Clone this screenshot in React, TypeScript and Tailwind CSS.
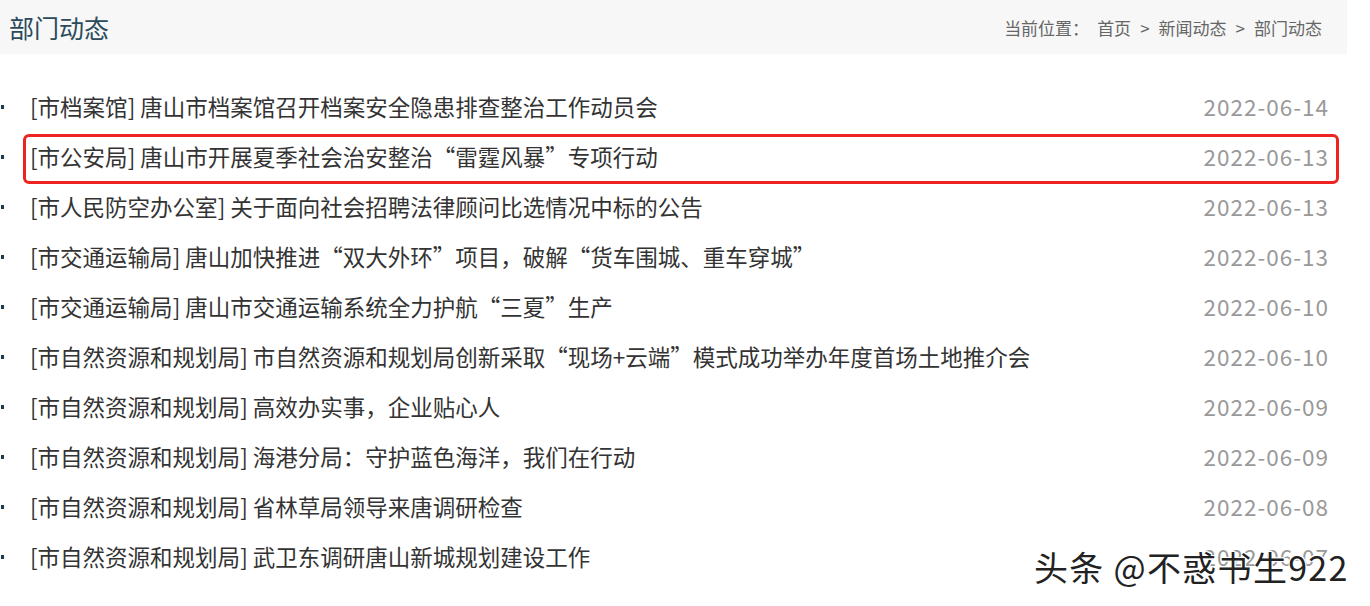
const items = [
  { dept: "市档案馆", title: "唐山市档案馆召开档案安全隐患排查整治工作动员会", date: "2022-06-14" },
  { dept: "市公安局", title: "唐山市开展夏季社会治安整治“雷霆风暴”专项行动", date: "2022-06-13", marked: true },
  { dept: "市人民防空办公室", title: "关于面向社会招聘法律顾问比选情况中标的公告", date: "2022-06-13" },
  { dept: "市交通运输局", title: "唐山加快推进“双大外环”项目，破解“货车围城、重车穿城”", date: "2022-06-13" },
  { dept: "市交通运输局", title: "唐山市交通运输系统全力护航“三夏”生产", date: "2022-06-10" },
  { dept: "市自然资源和规划局", title: "市自然资源和规划局创新采取“现场+云端”模式成功举办年度首场土地推介会", date: "2022-06-10" },
  { dept: "市自然资源和规划局", title: "高效办实事，企业贴心人", date: "2022-06-09" },
  { dept: "市自然资源和规划局", title: "海港分局：守护蓝色海洋，我们在行动", date: "2022-06-09" },
  { dept: "市自然资源和规划局", title: "省林草局领导来唐调研检查", date: "2022-06-08" },
  { dept: "市自然资源和规划局", title: "武卫东调研唐山新城规划建设工作", date: "2022-06-07" },
];

const font = { fontFamily: '"Microsoft YaHei", "Noto Sans CJK SC", "Noto Sans", sans-serif' };

export default function App() {
  return (
    <div className="relative w-[1370px] h-[606px] bg-white overflow-hidden" style={font}>
      <div className="w-[1347px] h-[54px] bg-[#f7f7f7] flex items-center justify-between pl-[9px] pr-[25px]">
        <h1 className="text-[25px] text-[#2b4a5b] leading-none">部门动态</h1>
        <div className="flex items-center text-[17px] text-[#666] leading-none">
          <span>当前位置：</span>
          <span className="ml-[8px]">首页</span>
          <span className="mx-[9px]">&gt;</span>
          <span>新闻动态</span>
          <span className="mx-[9px]">&gt;</span>
          <span>部门动态</span>
        </div>
      </div>

      <ul className="mt-[28px] w-[1340px] pr-[12px]">
        {items.map((item) => (
          <li key={item.title + item.date} className="relative h-[50px] flex items-center">
            <span className="w-[3px] h-[4px] ml-[1px] bg-[#1f3b4b] shrink-0" />
            <a className="ml-[26px] text-[22.5px] text-[#333] whitespace-nowrap">
              [{item.dept}] {item.title}
            </a>
            <span className="ml-auto text-[22.5px] tracking-[1px] -mr-[1px] text-[#999]">{item.date}</span>
            {item.marked ? (
              <div className="absolute left-[23px] right-[-11px] top-[2px] bottom-[-2px] border-[3px] border-[#ec2320] rounded-[6px]" />
            ) : null}
          </li>
        ))}
      </ul>

      <div
        className="absolute left-[1034px] top-[550px] text-[34px] leading-none text-[#222] whitespace-nowrap tracking-[1.3px]"
        style={{ textShadow: "1px 1px 0 #fff, -1px -1px 0 #fff, 1px -1px 0 #fff, -1px 1px 0 #fff" }}
      >
        头条 @不惑书生922
      </div>
    </div>
  );
}
